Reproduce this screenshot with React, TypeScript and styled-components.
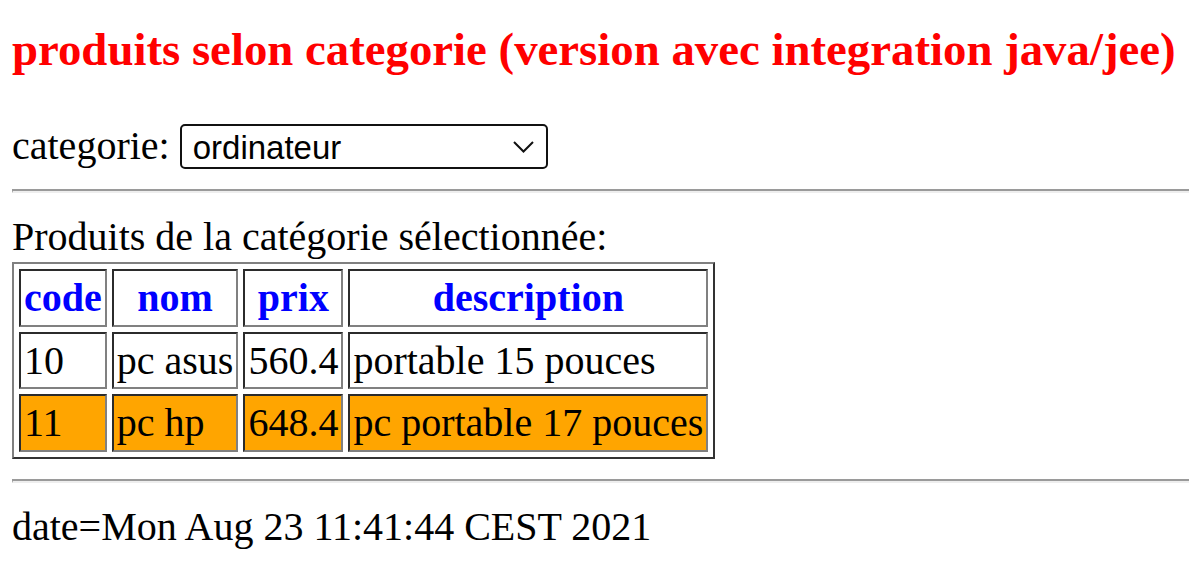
import React from "react";
import styled, { createGlobalStyle } from "styled-components";

const GlobalStyle = createGlobalStyle`
  body {
    margin: 0;
    background: #ffffff;
    color: #000000;
    font-family: "Liberation Serif", "Times New Roman", serif;
    font-size: 40px;
  }
`;

const Page = styled.div`
  padding: 0 0 20px 12px;
`;

const Title = styled.h3`
  margin: 22px 0 0;
  font-size: 46.8px;
  font-weight: bold;
  color: #ff0000;
  white-space: nowrap;
`;

const FilterRow = styled.div`
  margin-top: 46px;
  white-space: nowrap;
`;

const SelectWrap = styled.span`
  position: relative;
  display: inline-block;
`;

const Select = styled.select`
  appearance: none;
  width: 368px;
  height: 45px;
  box-sizing: border-box;
  padding: 2px 40px 0 11px;
  border: 2px solid #111111;
  border-radius: 5px;
  background: #ffffff;
  color: #000000;
  font-family: "Liberation Sans", Arial, sans-serif;
  font-size: 33px;
`;

const Chevron = styled.svg`
  position: absolute;
  right: 14px;
  top: 19px;
  pointer-events: none;
`;

const Rule = styled.hr<{ $top: number }>`
  height: 0;
  margin: ${(p) => p.$top}px 0 0;
  border-top: 2px solid #9a9a9a;
  border-left: 1px solid #9a9a9a;
  border-bottom: 2px solid #eeeeee;
  border-right: 0;
`;

const Caption = styled.div`
  margin-top: 20px;
  white-space: nowrap;
`;

const Table = styled.table`
  margin-top: 2px;
  border: 2px solid;
  border-color: #808080 #333333 #333333 #808080;
  border-spacing: 5px;
`;

const HeadCell = styled.th`
  padding: 3px 3px 3.5px;
  border: 2px solid;
  border-color: #2b2b2b #808080 #808080 #2b2b2b;
  color: #0000ff;
  font-weight: bold;
  text-align: center;
  white-space: nowrap;
`;

const Cell = styled.td<{ $highlight?: boolean }>`
  padding: 3px 3px 3.5px;
  border: 2px solid;
  border-color: #2b2b2b #808080 #808080 #2b2b2b;
  background: ${(p) => (p.$highlight ? "#ffa500" : "transparent")};
  white-space: nowrap;
`;

const DateLine = styled.div`
  margin-top: 20px;
  white-space: nowrap;
`;

interface Produit {
  code: number;
  nom: string;
  prix: number;
  description: string;
}

const produits: Produit[] = [
  { code: 10, nom: "pc asus", prix: 560.4, description: "portable 15 pouces" },
  { code: 11, nom: "pc hp", prix: 648.4, description: "pc portable 17 pouces" },
];

function ProduitRow(props: { produit: Produit; index: number }) {
  const hl = props.index % 2 === 1;
  return (
    <tr>
      <Cell $highlight={hl}>{props.produit.code}</Cell>
      <Cell $highlight={hl}>{props.produit.nom}</Cell>
      <Cell $highlight={hl}>{props.produit.prix}</Cell>
      <Cell $highlight={hl}>{props.produit.description}</Cell>
    </tr>
  );
}

export default function App() {
  return (
    <Page>
      <GlobalStyle />
      <Title>produits selon categorie (version avec integration java/jee)</Title>
      <FilterRow>
        categorie:{" "}
        <SelectWrap>
          <Select defaultValue="ordinateur">
            <option value="ordinateur">ordinateur</option>
            <option value="telephone">telephone</option>
          </Select>
          <Chevron width="21" height="12" viewBox="0 0 21 12">
            <path d="M1 1 L10.5 10.5 L20 1" fill="none" stroke="#111111" strokeWidth="2" />
          </Chevron>
        </SelectWrap>
      </FilterRow>
      <Rule $top={20} />
      <Caption>Produits de la catégorie sélectionnée:</Caption>
      <Table>
        <tbody>
          <tr>
            <HeadCell>code</HeadCell>
            <HeadCell>nom</HeadCell>
            <HeadCell>prix</HeadCell>
            <HeadCell>description</HeadCell>
          </tr>
          {produits.map((p, i) => (
            <ProduitRow produit={p} index={i} key={p.code} />
          ))}
        </tbody>
      </Table>
      <Rule $top={20} />
      <DateLine>date=Mon Aug 23 11:41:44 CEST 2021</DateLine>
    </Page>
  );
}
